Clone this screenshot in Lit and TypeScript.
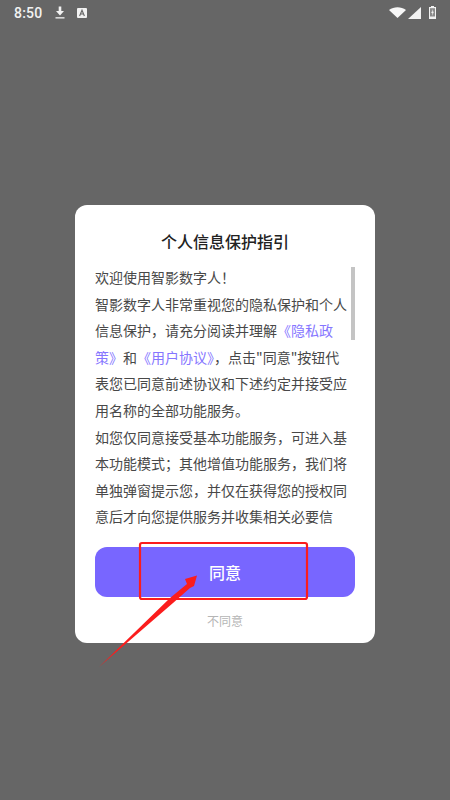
import { LitElement, html, css, svg } from "lit";
import { customElement } from "lit/decorators.js";

@customElement("app-root")
export class AppRoot extends LitElement {
  static styles = css`
    :host {
      display: block;
      width: 450px;
      height: 800px;
      position: relative;
      overflow: hidden;
      background: #666666;
      font-family: "Roboto", "Noto Sans CJK SC", sans-serif;
    }
    .status {
      height: 25px;
      display: flex;
      align-items: center;
      padding: 0 14px;
      color: #f2f2f2;
    }
    .time { font-size: 14px; font-weight: 500; letter-spacing: 0.2px; }
    .status svg { display: block; }
    .left-icons { display: flex; align-items: center; gap: 12px; margin-left: 13px; }
    .right-icons { display: flex; align-items: center; gap: 2px; margin-left: auto; }
    .battery { margin-left: 6px; }
    .center { display: flex; justify-content: center; padding-top: 180px; }
    .card {
      width: 300px;
      height: 438px;
      box-sizing: border-box;
      background: #fff;
      border-radius: 12px;
      padding: 26px 20px 0;
      display: flex;
      flex-direction: column;
    }
    h1 {
      margin: 0;
      font: 500 16px/20px "Noto Sans CJK SC", sans-serif;
      color: #222;
      text-align: center;
    }
    .scroll {
      margin-top: 13px;
      height: 265px;
      overflow: hidden;
      display: flex;
      justify-content: space-between;
    }
    .text {
      width: 254px;
      font: 400 14px/26.6px "Noto Sans CJK SC", sans-serif;
      color: #484848;
    }
    .text p { margin: 0; }
    .text a { color: #8676ff; text-decoration: none; }
    .bar { width: 4px; height: 73px; background: #c4c4c4; margin-top: 3px; }
    .agree {
      margin-top: 18px;
      height: 50px;
      border-radius: 12px;
      background: #7866ff;
      color: #fff;
      display: flex;
      align-items: center;
      justify-content: center;
      font: 500 16px/1 "Noto Sans CJK SC", sans-serif;
    }
    .decline {
      margin-top: 15px;
      text-align: center;
      font: 400 12px/18px "Noto Sans CJK SC", sans-serif;
      color: #b5b5b5;
    }
    .mark { position: absolute; left: 0; top: 0; pointer-events: none; }
  `;

  render() {
    return html`
      <div class="status">
        <span class="time">8:50</span>
        <div class="left-icons">
          <svg width="10" height="13" viewBox="0 0 10 13">
            <path d="M3.7 0.5h2.6v4.6H9L5 9.4 1 5.1h2.7z" fill="#f2f2f2"/>
            <rect x="0.5" y="11.2" width="9" height="1.3" fill="#f2f2f2"/>
          </svg>
          <svg width="10" height="10" viewBox="0 0 10 10">
            <rect width="10" height="10" rx="1" fill="#f2f2f2"/>
            <path d="M2.6 8 5 2.2 7.4 8M3.6 6h2.8" fill="none" stroke="#666" stroke-width="1.1"/>
          </svg>
        </div>
        <div class="right-icons">
          <svg width="17" height="11" viewBox="0 0 17 11">
            <path d="M0 3C5 -0.8 12 -0.8 17 3L8.5 11z" fill="#f7f7f7"/>
          </svg>
          <svg width="13" height="12" viewBox="0 0 13 12">
            <path d="M13 0V12H0z" fill="#f2f2f2"/>
          </svg>
          <svg class="battery" width="7" height="13" viewBox="0 0 7 13">
            <path d="M2 0h3v1h2v12H0V1h2z" fill="#f2f2f2"/>
            <path d="M1 2.2h5v8.3H1z" fill="#8a8a8a"/>
            <path d="M4 3 2.2 7h1.2L3 10 4.9 5.8H3.7z" fill="#f2f2f2"/>
          </svg>
        </div>
      </div>
      <div class="center">
        <div class="card">
          <h1>个人信息保护指引</h1>
          <div class="scroll">
            <div class="text">
              <p>欢迎使用智影数字人！</p>
              <p>智影数字人非常重视您的隐私保护和个人信息保护，请充分阅读并理解<a>《隐私政策》</a>和<a>《用户协议》</a>，点击"同意"按钮代表您已同意前述协议和下述约定并接受应用名称的全部功能服务。</p>
              <p>如您仅同意接受基本功能服务，可进入基本功能模式；其他增值功能服务，我们将单独弹窗提示您，并仅在获得您的授权同意后才向您提供服务并收集相关必要信</p>
            </div>
            <div class="bar"></div>
          </div>
          <div class="agree">同意</div>
          <div class="decline">不同意</div>
        </div>
      </div>
      <svg class="mark" width="450" height="800" viewBox="0 0 450 800">
        ${svg`<rect x="140" y="543" width="167" height="56" rx="2" fill="none" stroke="#fb1d1d" stroke-width="2.2"/>
        <path d="M99 667 L173 603 L190 588 L194 586 L197 575.5 L185 579 L187 584 L170 598 Z" fill="#fb1d1d"/>`}
      </svg>
    `;
  }
}
